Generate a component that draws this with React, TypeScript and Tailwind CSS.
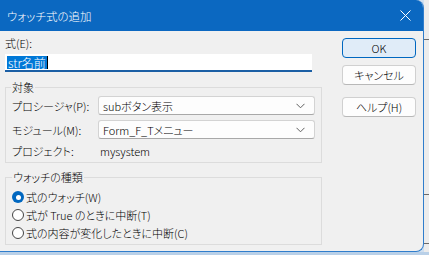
import React from "react";

const font = "font-['Noto_Sans_CJK_JP',sans-serif] [font-feature-settings:'palt'] font-light";

function Chevron() {
  return (
    <svg width="9" height="6" viewBox="0 0 9 6" className="shrink-0">
      <path d="M0.5 0.8 L4.5 4.8 L8.5 0.8" fill="none" stroke="#5f5f5f" strokeWidth="1" />
    </svg>
  );
}

function Select({ value }: { value: string }) {
  return (
    <div className="flex items-center justify-between w-[217px] h-[19px] bg-[#fdfdfd] border border-[#d3d3d3] border-b-[#a8a8a8] rounded-[3px] pl-[4px] pr-[9px]">
      <span className="text-[11px] leading-[14px] text-black">{value}</span>
      <Chevron />
    </div>
  );
}

function Radio({ checked, label }: { checked?: boolean; label: string }) {
  return (
    <div className="flex items-center h-[18px]">
      {checked ? (
        <div className="w-[12px] h-[12px] rounded-full bg-[#0067c0] flex items-center justify-center">
          <div className="w-[5px] h-[5px] rounded-full bg-white" />
        </div>
      ) : (
        <div className="w-[12px] h-[12px] rounded-full bg-white border border-[#444]" />
      )}
      <span className="ml-[2px] text-[11px] leading-[14px] text-black">{label}</span>
    </div>
  );
}

function Button({ label, primary }: { label: string; primary?: boolean }) {
  return (
    <div
      className={
        "w-[74px] h-[20px] rounded-[4px] flex items-center justify-center text-[11px] leading-[14px] text-black " +
        (primary
          ? "bg-[#e0ecf8] border border-[#0067c0]"
          : "bg-[#fdfdfd] border border-[#d0d0d0] border-b-[#b8b8b8]")
      }
    >
      {label}
    </div>
  );
}

export default function App() {
  return (
    <div className={"w-[429px] h-[255px] bg-[#cfdff0] flex flex-col overflow-hidden " + font}>
      <div className="flex h-[252px]">
        <div className="w-[424px] h-[252px] flex flex-col bg-[#f0f0f0] border-r border-b border-[#2f7dcc] rounded-tr-[8px] rounded-br-[8px] overflow-hidden">
          <div className="h-[31px] shrink-0 bg-[#0b68c1] flex items-center justify-between pl-[7px] pr-[12px]">
            <span className="text-white text-[11.5px] leading-[14px]">ウォッチ式の追加</span>
            <svg width="11" height="11" viewBox="0 0 11 11">
              <path d="M0.5 0.5 L10.5 10.5 M10.5 0.5 L0.5 10.5" stroke="white" strokeWidth="1" />
            </svg>
          </div>
          <div className="flex flex-1">
            <div className="w-[318px] ml-[5px] flex flex-col">
              <div className="mt-[5px] h-[14px] text-[11px] leading-[14px] text-black">式(E):</div>
              <div className="mt-[4px] w-[307px] h-[18px] bg-white border-b-2 border-[#1b5fa5] flex items-center pl-[2px]">
                <span className="bg-[#0078d7] text-white text-[12px] leading-[13px] px-[1px]">str名前</span>
                <span className="w-[1px] h-[13px] bg-black" />
              </div>
              <fieldset className="mt-[8px] w-[317px] border border-[#dcdcdc] px-[6px] pb-[4px]">
                <legend className="ml-[-1px] px-[1px] text-[11px] leading-[14px] text-black">対象</legend>
                <div className="mt-[2px] flex items-center">
                  <span className="w-[86px] text-[11px] leading-[14px] text-black">プロシージャ(P):</span>
                  <Select value="subボタン表示" />
                </div>
                <div className="mt-[5px] flex items-center">
                  <span className="w-[86px] text-[11px] leading-[14px] text-black">モジュール(M):</span>
                  <Select value="Form_F_Tメニュー" />
                </div>
                <div className="mt-[5px] h-[14px] flex items-center">
                  <span className="w-[88px] text-[11px] leading-[14px] text-black">プロジェクト:</span>
                  <span className="text-[11px] leading-[14px] text-black">mysystem</span>
                </div>
              </fieldset>
              <fieldset className="mt-[7px] w-[317px] border border-[#dcdcdc] px-[6px] pb-[2px]">
                <legend className="ml-[0px] px-[1px] text-[11px] leading-[14px] text-black">ウォッチの種類</legend>
                <div className="mt-[4px] flex flex-col">
                  <Radio checked label="式のウォッチ(W)" />
                  <Radio label="式が True のときに中断(T)" />
                  <Radio label="式の内容が変化したときに中断(C)" />
                </div>
              </fieldset>
            </div>
            <div className="ml-[19px] flex flex-col">
              <div className="mt-[7px]"><Button primary label="OK" /></div>
              <div className="mt-[7px]"><Button label="キャンセル" /></div>
              <div className="mt-[12px]"><Button label="ヘルプ(H)" /></div>
            </div>
          </div>
        </div>
        <div className="flex-1 bg-[#ececec] flex flex-col">
          <div className="h-[39px]" />
          <div className="h-[1px] bg-[#6b6b6b]" />
          <div className="h-[154px]" />
          <div className="h-[1px] bg-[#6b6b6b]" />
          <div className="h-[48px]" />
          <div className="h-[1px] bg-[#6b6b6b]" />
        </div>
      </div>
      <div className="flex-1 bg-[#b9d0e8]" />
    </div>
  );
}
